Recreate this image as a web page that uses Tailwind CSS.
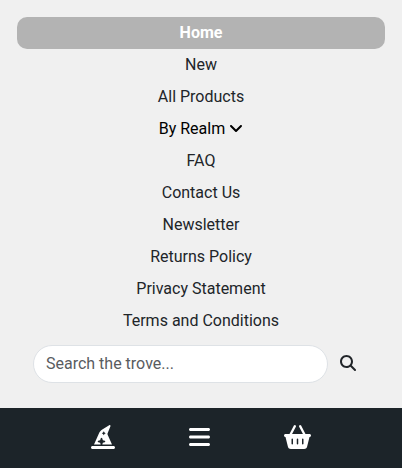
<!DOCTYPE html>
<html lang="en">
<head>
<meta charset="utf-8">
<title>Menu</title>
<script src="https://cdn.jsdelivr.net/npm/@tailwindcss/browser@4"></script>
</head>
<body class="flex h-[468px] w-[402px] flex-col overflow-hidden bg-[#f0f0f0] font-[Roboto,sans-serif] text-base text-[#212529]">
<main class="flex h-[408px] flex-col px-[17px] pt-[17px]">
<nav class="flex flex-col text-center leading-8">
<a class="h-8 rounded-[10px] bg-[#b3b3b3] font-bold text-white">Home</a>
<a class="h-8">New</a>
<a class="h-8">All Products</a>
<a class="flex h-8 items-center justify-center gap-1 text-black">By Realm
<svg class="mb-0.5 h-4 w-3.5" viewBox="0 0 448 512" fill="currentColor"><path d="M201.4 374.6c12.5 12.5 32.8 12.5 45.3 0l160-160c12.5-12.5 12.5-32.8 0-45.3s-32.8-12.5-45.3 0L224 306.7 86.6 169.4c-12.5-12.5-32.8-12.5-45.3 0s-12.5 32.8 0 45.3l160 160z"/></svg></a>
<a class="h-8">FAQ</a>
<a class="h-8">Contact Us</a>
<a class="h-8">Newsletter</a>
<a class="h-8">Returns Policy</a>
<a class="h-8">Privacy Statement</a>
<a class="h-8">Terms and Conditions</a>
</nav>
<form class="mt-2 flex items-center pl-4">
<input type="text" placeholder="Search the trove..." class="h-[38px] w-[295px] rounded-full border border-[#dee2e6] bg-white px-3 pb-0.5 placeholder:text-[#595c5f]">
<button type="button" class="mb-0.5 ml-3" aria-label="Search"><svg class="size-4" viewBox="0 0 512 512" fill="currentColor"><path d="M416 208c0 45.900-14.900 88.300-40 122.700L502.600 457.400c12.500 12.500 12.500 32.800 0 45.300s-32.800 12.500-45.300 0L330.700 376c-34.400 25.200-76.800 40-122.700 40C93.100 416 0 322.900 0 208S93.100 0 208 0S416 93.100 416 208zM208 352a144 144 0 1 0 0-288 144 144 0 1 0 0 288z"/></svg></button>
</form>
</main>
<footer class="flex h-[60px] items-start justify-between bg-[#1c2429] px-[91px] pt-[17px] text-white">
<svg class="h-6 w-6" viewBox="0 0 512 512" fill="currentColor"><path d="M64 416L168.600 180.700c15.300-34.400 40.300-63.500 72-83.700l146.900-94c3-1.900 6.500-2.900 10-2.900C407.700 0 416 8.300 416 18.500v1.600c0 2.600-.5 5.100-1.400 7.500L354.800 176.900c-1.900 4.700-2.800 9.700-2.800 14.700c0 5.500 1.200 11 3.400 16.100L448 416H240.900l11.800-35.400 40.400-13.500c6.500-2.200 10.900-8.300 10.900-15.200s-4.400-13-10.900-15.200l-40.400-13.500-13.500-40.400C237 276.400 230.900 272 224 272s-13 4.400-15.200 10.900l-13.500 40.400-40.400 13.500C148.400 339 144 345.100 144 352s4.400 13 10.900 15.200l40.400 13.500L207.100 416H64zM279.600 141.500c-1.100-3.300-4.100-5.500-7.600-5.500s-6.500 2.200-7.600 5.500l-6.700 20.200-20.200 6.700c-3.300 1.100-5.500 4.100-5.500 7.600s2.200 6.500 5.500 7.600l20.200 6.700 6.700 20.200c1.100 3.300 4.100 5.500 7.600 5.500s6.500-2.200 7.600-5.500l6.700-20.200 20.200-6.700c3.300-1.100 5.500-4.100 5.500-7.600s-2.200-6.500-5.500-7.600l-20.200-6.700-6.700-20.200zM32 448H480c17.700 0 32 14.300 32 32s-14.300 32-32 32H32c-17.700 0-32-14.300-32-32s14.300-32 32-32z"/></svg>
<svg class="h-6 w-[21px]" viewBox="0 0 448 512" fill="currentColor"><path d="M0 96C0 78.300 14.300 64 32 64H416c17.700 0 32 14.300 32 32s-14.300 32-32 32H32C14.300 128 0 113.700 0 96zM0 256c0-17.700 14.300-32 32-32H416c17.700 0 32 14.300 32 32s-14.300 32-32 32H32c-17.700 0-32-14.300-32-32zM448 416c0 17.700-14.300 32-32 32H32c-17.700 0-32-14.300-32-32s14.300-32 32-32H416c17.700 0 32 14.300 32 32z"/></svg>
<svg class="h-6 w-[27px]" viewBox="0 0 576 512" fill="currentColor"><path d="M253.300 35.100c6.100-11.800 1.500-26.300-10.200-32.400s-26.300-1.500-32.400 10.200L117.600 192H32c-17.700 0-32 14.300-32 32s14.300 32 32 32L83.900 463.500C91 492 116.600 512 146 512H430c29.400 0 55-20 62.100-48.500L544 256c17.700 0 32-14.300 32-32s-14.300-32-32-32H458.400L365.300 12.900C359.200 1.200 344.700-3.400 332.900 2.700s-16.300 20.600-10.200 32.400L404.300 192H171.700L253.300 35.100zM192 304v96c0 8.800-7.200 16-16 16s-16-7.200-16-16V304c0-8.800 7.200-16 16-16s16 7.200 16 16zm96-16c8.800 0 16 7.200 16 16v96c0 8.800-7.200 16-16 16s-16-7.200-16-16V304c0-8.800 7.200-16 16-16zm128 16v96c0 8.800-7.200 16-16 16s-16-7.200-16-16V304c0-8.800 7.200-16 16-16s16 7.200 16 16z"/></svg>
</footer>
</body>
</html>
